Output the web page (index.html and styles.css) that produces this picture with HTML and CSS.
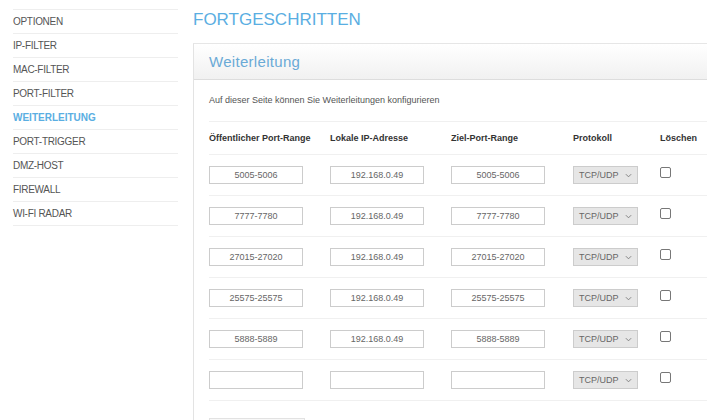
FILE: index.html
```html
<!DOCTYPE html>
<html lang="de">
<head>
<meta charset="UTF-8">
<meta name="viewport" content="width=device-width, initial-scale=1.0">
<title>Fortgeschritten - Weiterleitung</title>
<link rel="stylesheet" href="styles.css">
</head>
<body>

<div class="page">
    <ul class="sidebar">
        <li>OPTIONEN</li>
        <li>IP-FILTER</li>
        <li>MAC-FILTER</li>
        <li>PORT-FILTER</li>
        <li class="active">WEITERLEITUNG</li>
        <li>PORT-TRIGGER</li>
        <li>DMZ-HOST</li>
        <li>FIREWALL</li>
        <li>WI-FI RADAR</li>
    </ul>

    <div class="main">
        <h1>FORTGESCHRITTEN</h1>
        <div class="panel">
            <div class="panel-head">
                <h2>Weiterleitung</h2>
            </div>
            <div class="panel-body">
                <p class="intro">Auf dieser Seite können Sie Weiterleitungen konfigurieren</p>

                <div class="rules">
                    <div class="row head">
                        <span>Öffentlicher Port-Range</span>
                        <span>Lokale IP-Adresse</span>
                        <span>Ziel-Port-Range</span>
                        <span>Protokoll</span>
                        <span>Löschen</span>
                    </div>
                    <div class="row">
                        <input type="text" value="5005-5006">
                        <input type="text" value="192.168.0.49">
                        <input type="text" value="5005-5006">
                        <div class="select">TCP/UDP <svg viewBox="0 0 8 5" width="7" height="5"><path d="M1 1l3 3 3-3" fill="none" stroke="#777" stroke-width="1"/></svg></div>
                        <span class="check"></span>
                    </div>
                    <div class="row">
                        <input type="text" value="7777-7780">
                        <input type="text" value="192.168.0.49">
                        <input type="text" value="7777-7780">
                        <div class="select">TCP/UDP <svg viewBox="0 0 8 5" width="7" height="5"><path d="M1 1l3 3 3-3" fill="none" stroke="#777" stroke-width="1"/></svg></div>
                        <span class="check"></span>
                    </div>
                    <div class="row">
                        <input type="text" value="27015-27020">
                        <input type="text" value="192.168.0.49">
                        <input type="text" value="27015-27020">
                        <div class="select">TCP/UDP <svg viewBox="0 0 8 5" width="7" height="5"><path d="M1 1l3 3 3-3" fill="none" stroke="#777" stroke-width="1"/></svg></div>
                        <span class="check"></span>
                    </div>
                    <div class="row">
                        <input type="text" value="25575-25575">
                        <input type="text" value="192.168.0.49">
                        <input type="text" value="25575-25575">
                        <div class="select">TCP/UDP <svg viewBox="0 0 8 5" width="7" height="5"><path d="M1 1l3 3 3-3" fill="none" stroke="#777" stroke-width="1"/></svg></div>
                        <span class="check"></span>
                    </div>
                    <div class="row">
                        <input type="text" value="5888-5889">
                        <input type="text" value="192.168.0.49">
                        <input type="text" value="5888-5889">
                        <div class="select">TCP/UDP <svg viewBox="0 0 8 5" width="7" height="5"><path d="M1 1l3 3 3-3" fill="none" stroke="#777" stroke-width="1"/></svg></div>
                        <span class="check"></span>
                    </div>
                    <div class="row">
                        <input type="text" value="">
                        <input type="text" value="">
                        <input type="text" value="">
                        <div class="select">TCP/UDP <svg viewBox="0 0 8 5" width="7" height="5"><path d="M1 1l3 3 3-3" fill="none" stroke="#777" stroke-width="1"/></svg></div>
                        <span class="check"></span>
                    </div>
                </div>

                <button class="save">Speichern</button>
            </div>
        </div>
    </div>
</div>

</body>
</html>
```

FILE: styles.css
```css
body {
    font-family: "Liberation Sans", Arial, sans-serif;
    background-color: #ffffff;
    margin: 0;
    padding: 0;
    overflow: hidden;
}
.page {
    display: flex;
    padding-left: 13px;
    width: 720px;
    height: 420px;
    overflow: hidden;
}
.sidebar {
    list-style: none;
    margin: 9px 0 0 0;
    padding: 0;
    width: 165px;
    flex-shrink: 0;
    border-top: 1px solid #eeeeee;
}
.sidebar li {
    height: 23px;
    line-height: 23px;
    border-bottom: 1px solid #eeeeee;
    font-size: 10px;
    letter-spacing: -0.3px;
    color: #555555;
}
.sidebar li.active {
    color: #5aaee2;
    font-weight: bold;
    letter-spacing: 0;
}
.main {
    margin-left: 15px;
    flex: 1;
}
h1 {
    margin: 10px 0 0 0;
    height: 33px;
    font-size: 17px;
    font-weight: normal;
    color: #5aaee2;
}
.panel {
    border-left: 1px solid #e3e3e3;
    border-top: 1px solid #e6e6e6;
    height: 400px;
}
.panel-head {
    height: 35px;
    padding-left: 15px;
    background: linear-gradient(#ffffff, #f1f1f1);
    border-bottom: 1px solid #dddddd;
}
h2 {
    margin: 0;
    line-height: 36px;
    font-size: 15px;
    font-weight: normal;
    color: #6aaad6;
    letter-spacing: 0.3px;
}
.panel-body {
    padding-left: 15px;
}
.intro {
    margin: 0;
    padding: 15px 0 16px 0;
    font-size: 9px;
    color: #555555;
    border-bottom: 1px solid #f0f0f0;
}
.row {
    display: grid;
    grid-template-columns: 121px 121px 122px 87px 60px;
    align-items: start;
    height: 29px;
    padding-top: 11px;
    border-bottom: 1px solid #f0f0f0;
}
.row.head {
    height: 21px;
    padding-top: 11px;
    font-size: 9px;
    font-weight: bold;
    color: #333333;
}
.row input {
    box-sizing: border-box;
    width: 94px;
    height: 18px;
    margin: 0;
    border: 1px solid #cccccc;
    font-family: "Liberation Sans", Arial, sans-serif;
    font-size: 9px;
    color: #666666;
    text-align: center;
    padding: 0;
}
.select {
    box-sizing: border-box;
    width: 65px;
    height: 18px;
    display: flex;
    align-items: center;
    justify-content: space-between;
    padding: 0 5px 0 5px;
    background-color: #e6e6e6;
    border: 1px solid #cccccc;
    font-size: 9px;
    color: #666666;
}
.check {
    display: block;
    width: 9px;
    height: 9px;
    margin-top: 1px;
    border: 1px solid #777777;
    border-radius: 2px;
}
.save {
    display: block;
    margin-top: 17px;
    width: 96px;
    height: 24px;
    padding-top: 6px;
    border: 1px solid #e2e2e2;
    background: linear-gradient(#f8f8f8, #ececec);
    font-family: "Liberation Sans", Arial, sans-serif;
    font-size: 10px;
    color: #666666;
}
```
